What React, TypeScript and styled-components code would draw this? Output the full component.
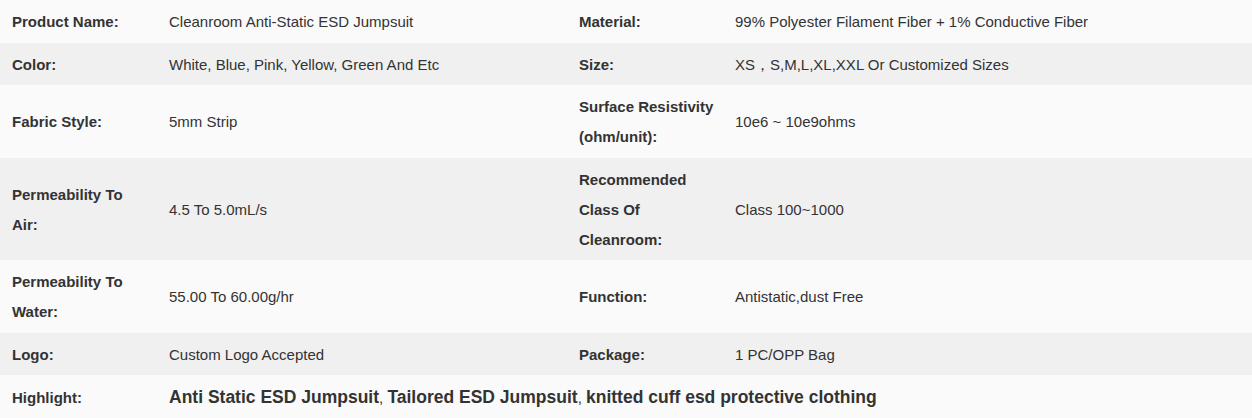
import React from "react";
import styled, { createGlobalStyle } from "styled-components";

const Global = createGlobalStyle`
  html, body { margin: 0; padding: 0; background: #fafafa; }
  body { font-family: "Liberation Sans", Arial, sans-serif; color: #333; }
`;

const Table = styled.div`
  display: flex;
  flex-direction: column;
  width: 1252px;
`;

const Row = styled.div<{ $alt: boolean }>`
  display: grid;
  grid-template-columns: 157px 410px 156px 1fr;
  align-items: center;
  background: ${(p) => (p.$alt ? "#f0f0f0" : "#fafafa")};
  padding: 7px 0 5.5px;
`;

const Label = styled.div`
  padding: 0 8px 0 12px;
  font-size: 15px;
  line-height: 30px;
  font-weight: bold;
  color: #333;
`;

const Value = styled.div`
  padding: 0 8px 0 12px;
  font-size: 15px;
  line-height: 30px;
  color: #333;
`;

const HighlightValue = styled(Value)`
  grid-column: 2 / 5;
`;

const Tag = styled.strong`
  font-size: 17.5px;
  font-weight: bold;
  color: #333;
`;

const rows: [string, string, string, string][] = [
  ["Product Name:", "Cleanroom Anti-Static ESD Jumpsuit", "Material:", "99% Polyester Filament Fiber + 1% Conductive Fiber"],
  ["Color:", "White, Blue, Pink, Yellow, Green And Etc", "Size:", "XS，S,M,L,XL,XXL Or Customized Sizes"],
  ["Fabric Style:", "5mm Strip", "Surface Resistivity (ohm/unit):", "10e6 ~ 10e9ohms"],
  ["Permeability To Air:", "4.5 To 5.0mL/s", "Recommended Class Of Cleanroom:", "Class 100~1000"],
  ["Permeability To Water:", "55.00 To 60.00g/hr", "Function:", "Antistatic,dust Free"],
  ["Logo:", "Custom Logo Accepted", "Package:", "1 PC/OPP Bag"],
];

const highlights = ["Anti Static ESD Jumpsuit", "Tailored ESD Jumpsuit", "knitted cuff esd protective clothing"];

export default function App() {
  return (
    <>
      <Global />
      <Table>
        {rows.map((r, i) => (
          <Row key={i} $alt={i % 2 === 1}>
            <Label>{r[0]}</Label>
            <Value>{r[1]}</Value>
            <Label>{r[2]}</Label>
            <Value>{r[3]}</Value>
          </Row>
        ))}
        <Row $alt={false}>
          <Label>Highlight:</Label>
          <HighlightValue>
            {highlights.map((h, i) => (
              <React.Fragment key={h}>
                {i > 0 && ", "}
                <Tag>{h}</Tag>
              </React.Fragment>
            ))}
          </HighlightValue>
        </Row>
      </Table>
    </>
  );
}
